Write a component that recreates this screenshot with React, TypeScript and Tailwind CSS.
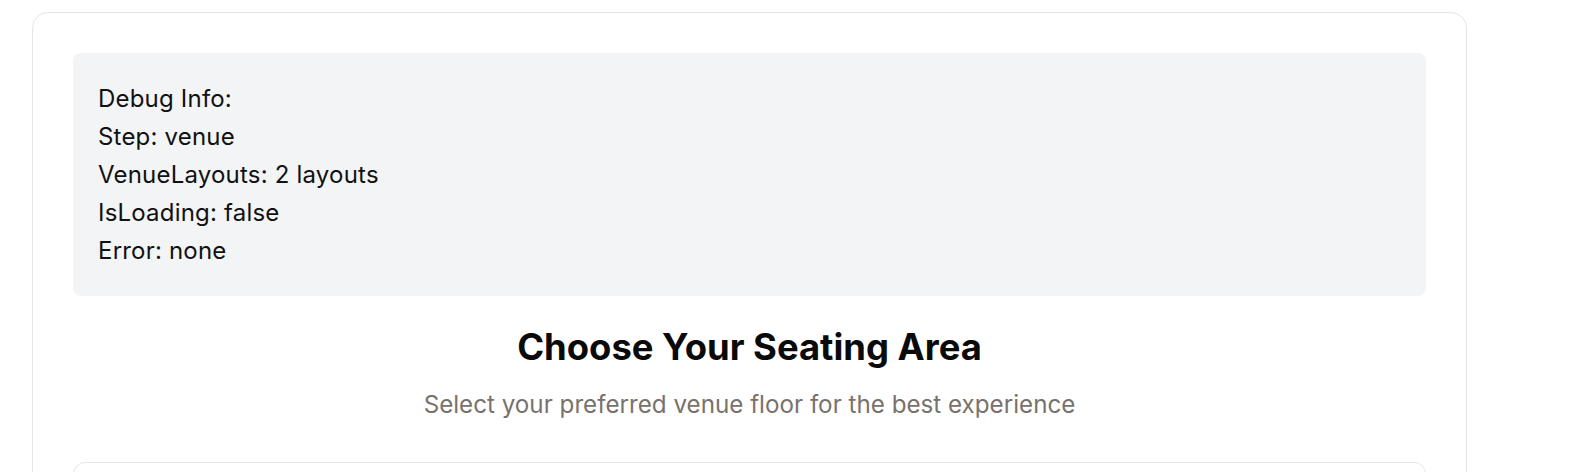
const debugLines = [
  'Debug Info:',
  'Step: venue',
  'VenueLayouts: 2 layouts',
  'IsLoading: false',
  'Error: none',
]

export default function App() {
  return (
    <div className="min-h-screen bg-white pt-3 pl-8 font-['Inter','Liberation_Sans',sans-serif]">
      <div className="w-[1435px] rounded-2xl border border-[#e5e5e5] bg-white px-10 pt-10 pb-10">
        <div className="mb-[31px] rounded-lg bg-[#f3f4f6] pl-[25px] pr-6 pt-[27px] pb-[26px] text-[24px] leading-[38px] tracking-[0.2px] text-[#111111]">
          {debugLines.map((line) => (
            <div key={line}>{line}</div>
          ))}
        </div>

        <div className="mb-[41px] text-center">
          <h2 className="text-[36.4px] leading-[40px] font-bold text-[#0a0a0a]">Choose Your Seating Area</h2>
          <p className="mt-[22px] text-[24.2px] leading-[32px] text-[#78716c]">
            Select your preferred venue floor for the best experience
          </p>
        </div>

        <div className="h-48 rounded-xl border border-[#e5e5e5] bg-white" />
      </div>
    </div>
  )
}
